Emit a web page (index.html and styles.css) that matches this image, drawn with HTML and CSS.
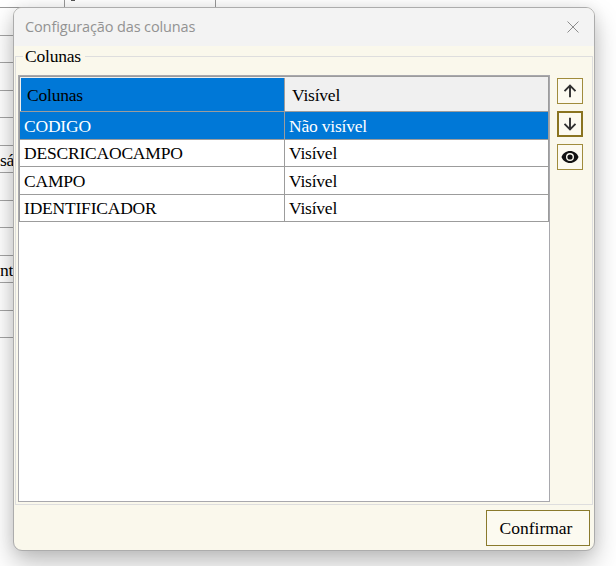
FILE: index.html
```html
<!DOCTYPE html>
<html lang="pt-BR">
<head>
<meta charset="utf-8">
<title>Configuração das colunas</title>
<link rel="stylesheet" href="styles.css">
</head>
<body>
<div class="backdrop">
  <div class="backdrop-top"><span class="backdrop-field"></span></div>
  <div class="strip"></div><div class="strip"></div><div class="strip"></div><div class="strip"></div><div class="strip"></div>
  <div class="strip">sá</div>
  <div class="strip"></div><div class="strip"></div><div class="strip"></div>
  <div class="strip">nt</div>
  <div class="strip"></div><div class="strip"></div>
</div>
<main class="dialog">
  <header class="titlebar">
    <span class="title">Configuração das colunas</span>
    <svg class="close" viewBox="0 0 12 12"><path d="M.5 .5l11 11M11.5 .5l-11 11"/></svg>
  </header>
  <fieldset class="group">
    <legend>Colunas</legend>
    <div class="content">
      <div class="grid">
        <div class="row head"><div class="cell active">Colunas</div><div class="cell">Visível</div></div>
        <div class="row selected"><div class="cell">CODIGO</div><div class="cell">Não visível</div></div>
        <div class="row"><div class="cell">DESCRICAOCAMPO</div><div class="cell">Visível</div></div>
        <div class="row"><div class="cell">CAMPO</div><div class="cell">Visível</div></div>
        <div class="row"><div class="cell">IDENTIFICADOR</div><div class="cell">Visível</div></div>
      </div>
      <div class="tools">
        <button class="tool" aria-label="Mover para cima"><svg viewBox="0 0 24 24"><path class="line" d="M12 18.200V7.200M6.500 12.200l5.500-5.500 5.500 5.500"/></svg></button>
        <button class="tool focused" aria-label="Mover para baixo"><svg viewBox="1 1 22 22"><path class="line" d="M12 5.800v11M6.500 11.800l5.500 5.500 5.500-5.500"/></svg></button>
        <button class="tool" aria-label="Visibilidade"><svg viewBox="0 0 24 24"><path class="eye" d="M12 6C8 6 4.800 8.500 3.500 12c1.300 3.500 4.500 6 8.500 6s7.200-2.500 8.500-6C19.200 8.500 16 6 12 6z"/><circle class="iris" cx="12" cy="12" r="3.300"/></svg></button>
      </div>
    </div>
  </fieldset>
  <footer class="footer"><button class="confirm">Confirmar</button></footer>
</main>
</body>
</html>
```
FILE: styles.css
```css
* { box-sizing: border-box; }
body {
  margin: 0;
  width: 616px;
  height: 566px;
  overflow: hidden;
  position: relative;
  background: #fff;
  color: #000;
  font: 17.5px/20px "Liberation Serif", serif;
  letter-spacing: -.2px;
}
.backdrop-top {
  height: 8px;
  padding-left: 64px;
  border-bottom: 1px solid #999;
  width: 216px;
}
.backdrop-field {
  display: block;
  height: 7px;
  width: 152px;
  padding-left: 6px;
  border: solid #999;
  border-width: 0 1px;
}
.backdrop-field::before {
  content: "";
  display: block;
  width: 4px;
  height: 1px;
  background: #555;
}
.strip {
  width: 20px;
  height: 27.5px;
  padding-top: 4px;
  border-bottom: 1px solid #a5a5a5;
}
.dialog {
  position: absolute;
  left: 13px;
  top: 7px;
  width: 582px;
  height: 544px;
  border: 1px solid #acacac;
  border-radius: 9px;
  background: #faf8ec;
  box-shadow: 0 12px 26px rgba(0, 0, 0, .25), 0 0 14px rgba(0, 0, 0, .08);
  display: flex;
  flex-direction: column;
  overflow: hidden;
}
.titlebar {
  height: 38px;
  flex: none;
  display: flex;
  align-items: center;
  justify-content: space-between;
  padding: 0 15px 0 11px;
  background: #f3f3f3;
}
.title {
  color: #929292;
  font: 14.5px/20px "Open Sans", sans-serif;
  letter-spacing: -.12px;
}
.close { width: 12px; height: 12px; fill: none; stroke: #8c8c8c; stroke-width: 1; }
.group {
  margin: 0 1px;
  padding: 0 0 2px 2px;
  height: 459px;
  min-width: 0;
  border: 1px solid #dedede;
}
.group legend { margin-left: 5px; padding: 0 4px 0 2px; height: 20px; }
.content { display: flex; gap: 7px; padding-top: 9px; }
.grid {
  width: 532px;
  height: 427px;
  background: #fff;
  border: 1px solid #a8a8ad;
}
.row {
  display: flex;
  height: 27.5px;
  width: 530px;
  border: solid #9c9c9c;
  border-width: 0 1px 1px;
}
.cell { width: 264px; padding: 3.5px 0 0 4px; line-height: 20px; }
.cell + .cell { border-left: 1px solid #9c9c9c; }
.head {
  height: 36px;
  padding: 1px 0 0 1px;
  border-top: 1px solid #9c9c9c;
  background: #f0f0f0;
}
.head .cell { padding: 7px 0 0 7px; }
.head .cell.active { width: 263px; padding-left: 6px; }
.active, .selected { background: #0078d7; }
.selected { color: #fff; }
.tools { display: flex; flex-direction: column; gap: 7px; padding-top: 3px; }
.tool {
  width: 26px;
  height: 26px;
  padding: 0;
  border: 1px solid #a08c3c;
  background: #fcfaf0;
}
.tool svg { display: block; width: 24px; height: 24px; }
.tool.focused { border: 2px solid #8a7420; }
.tool.focused svg { width: 22px; height: 22px; }
.line { fill: none; stroke: #303030; stroke-width: 1.9; }
.eye { fill: #111; }
.iris { fill: #111; stroke: #fcfaf0; stroke-width: 1.4; }
.footer { display: flex; justify-content: flex-end; padding: 5px 4px 0 0; }
.confirm {
  width: 104px;
  height: 36px;
  padding: 0 4px 1px 0;
  border: 1px solid #8a7a2c;
  background: #fcfaf0;
  color: #000;
  font: 17.5px/20px "Liberation Serif", serif;
}
```
